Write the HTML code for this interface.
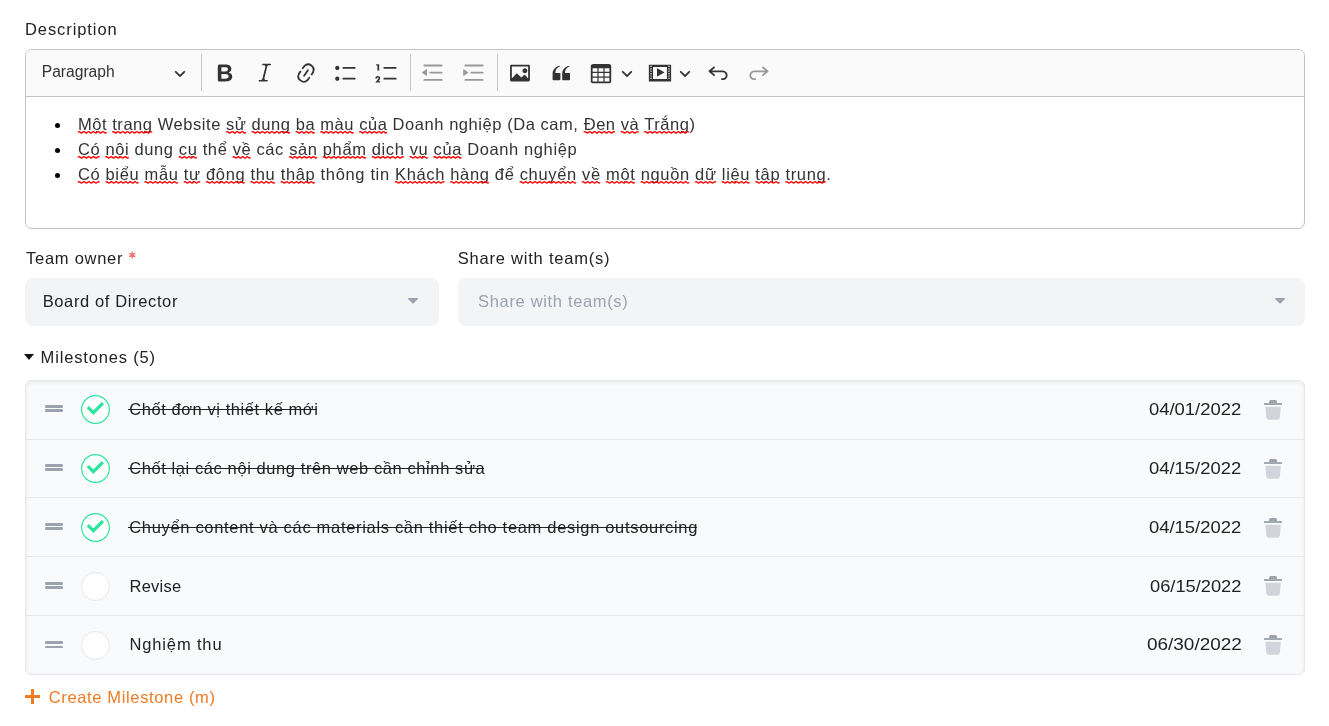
<!DOCTYPE html>
<html><head><meta charset="utf-8">
<style>
*{box-sizing:border-box;margin:0;padding:0}
html,body{width:1329px;height:726px;overflow:hidden;background:#fff}
body{font-family:"Liberation Sans",sans-serif;color:#111;position:relative}
#wrap{position:absolute;left:0;top:0;width:1329px;height:726px;will-change:transform}
.a{position:absolute;white-space:nowrap}
.t{font-size:16.5px;line-height:20px}
#editor{left:25px;top:49px;width:1280px;height:180px;border:1px solid #c4c4c4;border-radius:7px;overflow:hidden;background:#fff}
#tb{left:0;top:0;width:1278px;height:47px;background:#fafafa;border-bottom:1px solid #c4c4c4}
.sep{position:absolute;top:4.2px;width:1px;height:36.5px;background:#c4c4c4}
.ic{position:absolute;width:24px;height:24px}
.dd{position:absolute;width:12px;height:12px}
.dot{position:absolute;left:55px;width:5.2px;height:5.2px;border-radius:50%;background:#000}
.sel{position:absolute;border-radius:8px;background:#f3f4f6;height:48px;top:278px}
.ms{position:absolute;left:25px;top:380px;width:1280px;height:295px;border:1px solid #e5e7eb;border-radius:6px;background:#f9fafb;overflow:hidden;box-shadow:inset 0 2px 4px 0 rgba(0,0,0,0.06)}
.msep{position:absolute;left:26px;width:1278px;height:1px;background:#e5e7eb}
.handle{position:absolute;left:45.2px;width:17.4px;height:7px}
.handle:before,.handle:after{content:"";position:absolute;left:0;width:17.4px;height:2.6px;background:#9ca3af;border-radius:1.3px}
.handle:before{top:0}.handle:after{top:4.4px}
.circ{position:absolute;left:81px;width:29px;height:29px}
.circ.done{border:none;background:none}
.chk{position:absolute;left:0;top:0;width:29px;height:29px}
.t.done::after{content:"";position:absolute;left:-1.2px;right:1.4px;top:9.77px;height:1.25px;background:#222}
.trash{position:absolute;left:1264px;width:18px;height:20px}
</style></head><body>
<div id="wrap">
<div class="a t" style="left:25.00px;top:19.18px;color:#222;letter-spacing:0.920px">Description</div>
<div id="editor" class="a">
  <div id="tb" class="a">
    <div class="a" style="left:15.8px;top:12.35px;font-size:15.6px;color:#333;line-height:20px">Paragraph</div>
    <svg class="dd" style="left:147.8px;top:16.5px" viewBox="0 0 10 10"><path fill="#333" d="M.941 4.523a.75.75 0 1 1 1.06-1.06l3.006 3.005 3.005-3.005a.75.75 0 1 1 1.06 1.06l-3.549 3.55a.75.75 0 0 1-1.168-.136L.941 4.523z"/></svg>
    <div class="sep" style="left:175px"></div>
    <!-- bold -->
    <svg class="ic" style="left:186.8px;top:11px" viewBox="0 0 20 20"><path fill="#333" d="M10.187 17H5.773c-.637 0-1.092-.138-1.364-.415-.273-.277-.409-.718-.409-1.323V4.738c0-.617.14-1.062.419-1.332.279-.27.73-.406 1.354-.406h4.68c.69 0 1.288.041 1.793.124.506.083.96.242 1.36.478.341.197.644.447.906.75a3.262 3.262 0 0 1 .808 2.162c0 1.401-.722 2.426-2.167 3.075C15.05 10.175 16 11.315 16 13.01a3.756 3.756 0 0 1-2.296 3.504 6.1 6.1 0 0 1-1.517.377c-.571.073-1.238.11-2 .11zm-.217-6.217H7v4.087h3.069c1.977 0 2.965-.69 2.965-2.072 0-.707-.256-1.22-.768-1.537-.512-.319-1.277-.478-2.296-.478zM7 5.13v3.619h2.606c.729 0 1.292-.067 1.69-.2a1.6 1.6 0 0 0 .91-.765c.165-.267.247-.566.247-.897 0-.707-.26-1.176-.778-1.409-.519-.232-1.31-.348-2.375-.348H7z"/></svg>
    <!-- italic -->
    <svg class="ic" style="left:227.1px;top:11px" viewBox="0 0 20 20"><path fill="#333" d="m9.586 14.633.021.004c-.036.335.095.655.393.962.082.083.173.15.274.201h1.474a.6.6 0 1 1 0 1.2H5.304a.6.6 0 0 1 0-1.2h1.15c.474-.07.809-.182 1.005-.334.157-.122.291-.32.404-.595l2.416-9.864c.014-.138.021-.216.022-.234a.615.615 0 0 0-.019-.105c-.036-.336-.17-.632-.4-.888-.105-.116-.242-.208-.41-.275H8.196a.6.6 0 0 1 0-1.2h6.276a.6.6 0 1 1 0 1.2h-1.149c-.474.07-.809.182-1.005.333-.157.122-.291.32-.404.595l-2.416 9.864c-.014.138-.02.216-.021.233z"/></svg>
    <!-- link -->
    <svg class="ic" style="left:267.8px;top:11px" viewBox="0 0 20 20"><path fill="#333" d="m11.077 15 .991-1.416a.75.75 0 1 1 1.229.86l-1.148 1.64a.748.748 0 0 1-.217.206 5.251 5.251 0 0 1-8.503-5.955.741.741 0 0 1 .12-.274l1.147-1.639a.75.75 0 1 1 1.228.86L4.933 10.7l.006.003a3.75 3.75 0 0 0 6.132 4.294l.006.004zm5.494-5.335a.748.748 0 0 1-.12.274l-1.147 1.639a.75.75 0 1 1-1.228-.86l.86-1.23a3.75 3.75 0 0 0-6.144-4.301l-.86 1.229a.75.75 0 0 1-1.229-.86l1.148-1.64a.748.748 0 0 1 .217-.206 5.251 5.251 0 0 1 8.503 5.955zm-4.563-2.532a.75.75 0 0 1 .184 1.045l-3.155 4.505a.75.75 0 1 1-1.229-.86l3.155-4.506a.75.75 0 0 1 1.045-.184z"/></svg>
    <!-- bulleted -->
    <svg class="ic" style="left:307.7px;top:11px" viewBox="0 0 20 20"><path fill="#333" d="M7 5.75c0 .414.336.75.75.75h9.5a.75.75 0 1 0 0-1.5h-9.5a.75.75 0 0 0-.75.75zm-6 0C1 4.784 1.777 4 2.75 4c.966 0 1.75.777 1.75 1.75 0 .966-.777 1.75-1.75 1.75C1.784 7.5 1 6.723 1 5.75zm6 9c0 .414.336.75.75.75h9.5a.75.75 0 1 0 0-1.5h-9.5a.75.75 0 0 0-.75.75zm-6 0c0-.966.777-1.75 1.75-1.75.966 0 1.75.777 1.75 1.75 0 .966-.777 1.75-1.75 1.75-.966 0-1.75-.777-1.75-1.75z"/></svg>
    <!-- numbered -->
    <svg class="ic" style="left:349.4px;top:11px" viewBox="0 0 20 20"><path fill="#333" d="M7 5.75c0 .414.336.75.75.75h9.5a.75.75 0 1 0 0-1.5h-9.5a.75.75 0 0 0-.75.75zM3.5 3v5H2V3.7H1v-1h2.5V3zM.343 17.857l2.59-3.257H2.92a.6.6 0 1 0-1.04 0H.302a2 2 0 1 1 3.995 0h-.001c-.048.405-.16.734-.333.988-.175.254-.59.692-1.244 1.312H4.3v1h-4l.043-.043zM7 14.75a.75.75 0 0 1 .75-.75h9.5a.75.75 0 1 1 0 1.5h-9.5a.75.75 0 0 1-.75-.75z"/></svg>
    <div class="sep" style="left:384px"></div>
    <!-- outdent -->
    <svg class="ic" style="left:394.6px;top:11px" viewBox="0 0 20 20"><path fill="#999" d="M2 3.75c0 .414.336.75.75.75h14.5a.75.75 0 1 0 0-1.5H2.75a.75.75 0 0 0-.75.75zm5 6c0 .414.336.75.75.75h9.5a.75.75 0 1 0 0-1.5h-9.5a.75.75 0 0 0-.75.75zM2.75 16.5h14.5a.75.75 0 1 0 0-1.5H2.75a.75.75 0 1 0 0 1.5zm1.618-9.55L.98 9.358a.4.4 0 0 0 .013.661l3.39 2.207A.4.4 0 0 0 5 11.892V7.275a.4.4 0 0 0-.632-.326z"/></svg>
    <!-- indent -->
    <svg class="ic" style="left:435.8px;top:11px" viewBox="0 0 20 20"><path fill="#999" d="M2 3.75c0 .414.336.75.75.75h14.5a.75.75 0 1 0 0-1.5H2.75a.75.75 0 0 0-.75.75zm5 6c0 .414.336.75.75.75h9.5a.75.75 0 1 0 0-1.5h-9.5a.75.75 0 0 0-.75.75zM2.75 16.5h14.5a.75.75 0 1 0 0-1.5H2.75a.75.75 0 1 0 0 1.5zM1.632 6.95 5.02 9.358a.4.4 0 0 1-.013.661l-3.39 2.207A.4.4 0 0 1 1 11.892V7.275a.4.4 0 0 1 .632-.326z"/></svg>
    <div class="sep" style="left:471px"></div>
    <!-- image -->
    <svg class="ic" style="left:481.8px;top:11px" viewBox="0 0 20 20"><path fill="#333" d="M6.91 10.54c.26-.23.64-.21.88.03l3.36 3.14 2.23-2.06a.64.64 0 0 1 .87 0l2.52 2.97V4.5H3.2v10.12l3.71-4.08zm10.27-7.51c.6 0 1.09.47 1.09 1.05v11.84c0 .59-.49 1.06-1.09 1.06H2.79c-.6 0-1.09-.47-1.09-1.06V4.08c0-.58.49-1.05 1.1-1.05h14.38zm-5.08 5.08c0-1.1.9-2 2-2s2 .9 2 2-.9 2-2 2-2-.9-2-2z"/></svg>
    <!-- quote -->
    <svg class="ic" style="left:523.2px;top:11px" viewBox="0 0 20 20"><path fill="#333" d="M3 10.423a6.5 6.5 0 0 1 6.056-6.408l.038.67C6.448 5.423 5.354 7.663 5.22 10H9c.552 0 .5.432.5.986v4.511c0 .554-.448.503-1 .503h-5c-.552 0-.5-.449-.5-1.003v-4.574zm8 0a6.5 6.5 0 0 1 6.056-6.408l.038.67c-2.646.739-3.74 2.979-3.873 5.315H17c.552 0 .5.432.5.986v4.511c0 .554-.448.503-1 .503h-5c-.552 0-.5-.449-.5-1.003v-4.574z"/></svg>
    <!-- table -->
    <svg class="ic" style="left:562.8px;top:11px" viewBox="0 0 20 20"><path fill="#333" d="M3 6v3h4V6H3zm0 4v3h4v-3H3zm0 4v3h4v-3H3zm5 3h4v-3H8v3zm5 0h4v-3h-4v3zm4-4v-3h-4v3h4zm0-4V6h-4v3h4zm1.5 8a1.5 1.5 0 0 1-1.5 1.5H3A1.5 1.5 0 0 1 1.5 17V4c.222-.863 1.068-1.5 2-1.5h13c.932 0 1.778.637 2 1.5v13zM12 13v-3H8v3h4zm0-4V6H8v3h4z"/></svg>
    <svg class="dd" style="left:595px;top:16.5px" viewBox="0 0 10 10"><path fill="#333" d="M.941 4.523a.75.75 0 1 1 1.06-1.06l3.006 3.005 3.005-3.005a.75.75 0 1 1 1.06 1.06l-3.549 3.55a.75.75 0 0 1-1.168-.136L.941 4.523z"/></svg>
    <!-- media -->
    <svg class="ic" style="left:622.2px;top:11px" viewBox="0 0 20 20"><path fill="#333" d="M18.68 3.03c.6 0 .59-.03.59.55v12.84c0 .59.01.56-.59.56H1.29c-.6 0-.59.03-.59-.56V3.58c0-.58-.01-.55.6-.55h17.38zM15.77 15V5H4.2v10h11.57zM2 4v1h1V4H2zm0 2v1h1V6H2zm0 2v1h1V8H2zm0 2v1h1v-1H2zm0 2v1h1v-1H2zm0 2v1h1v-1H2zM17 4v1h1V4h-1zm0 2v1h1V6h-1zm0 2v1h1V8h-1zm0 2v1h1v-1h-1zm0 2v1h1v-1h-1zm0 2v1h1v-1h-1zM7.5 6.677a.4.4 0 0 1 .593-.351l5.133 2.824a.4.4 0 0 1 0 .7l-5.133 2.824A.4.4 0 0 1 7.5 12.323V6.677z"/></svg>
    <svg class="dd" style="left:652.8px;top:16.5px" viewBox="0 0 10 10"><path fill="#333" d="M.941 4.523a.75.75 0 1 1 1.06-1.06l3.006 3.005 3.005-3.005a.75.75 0 1 1 1.06 1.06l-3.549 3.55a.75.75 0 0 1-1.168-.136L.941 4.523z"/></svg>
    <!-- undo -->
    <svg class="ic" style="left:679.8px;top:11px" viewBox="0 0 20 20"><path fill="#333" d="m5.042 9.367 2.189 1.837a.75.75 0 0 1-.965 1.149l-3.788-3.18a.747.747 0 0 1-.21-.284.75.75 0 0 1 .17-.945L6.23 4.762a.75.75 0 1 1 .964 1.15L4.863 7.866h8.917A.75.75 0 0 1 14 7.9a4 4 0 1 1-1.477 7.718l.344-1.489a2.5 2.5 0 1 0 1.094-4.73l.008-.032H5.042z"/></svg>
    <!-- redo -->
    <svg class="ic" style="left:720.6px;top:11px" viewBox="0 0 20 20"><path fill="#999" d="m14.958 9.367-2.189 1.837a.75.75 0 0 0 .965 1.149l3.788-3.18a.747.747 0 0 0 .21-.284.75.75 0 0 0-.17-.945L13.77 4.762a.75.75 0 1 0-.964 1.15l2.331 1.955H6.22A.75.75 0 0 0 6 7.9a4 4 0 1 0 1.477 7.718l-.344-1.489A2.5 2.5 0 1 1 6.039 9.4l-.008-.032h8.927z"/></svg>
  </div>
  </div>
<div class="dot" style="top:122.8px"></div>
<div class="dot" style="top:147.8px"></div>
<div class="dot" style="top:172.8px"></div>
<div class="a t" style="left:77.90px;top:114.08px;color:#333;letter-spacing:0.554px"><span class="sq">Một</span> <span class="sq">trang</span> Website <span class="sq">sử</span> <span class="sq">dung</span> <span class="sq">ba</span> <span class="sq">màu</span> <span class="sq">của</span> Doanh nghiệp (Da cam, <span class="sq">Đen</span> <span class="sq">và</span> <span class="sq">Trắng</span>)</div>
<div class="a t" style="left:77.90px;top:139.13px;color:#333;letter-spacing:0.610px"><span class="sq">Có</span> <span class="sq">nội</span> dung <span class="sq">cụ</span> thể <span class="sq">về</span> các <span class="sq">sản</span> <span class="sq">phẩm</span> <span class="sq">dịch</span> <span class="sq">vụ</span> <span class="sq">của</span> Doanh nghiệp</div>
<div class="a t" style="left:77.90px;top:164.18px;color:#333;letter-spacing:0.648px"><span class="sq">Có</span> <span class="sq">biểu</span> <span class="sq">mẫu</span> <span class="sq">tự</span> <span class="sq">động</span> <span class="sq">thu</span> <span class="sq">thập</span> thông tin <span class="sq">Khách</span> <span class="sq">hàng</span> để <span class="sq">chuyển</span> <span class="sq">về</span> <span class="sq">một</span> <span class="sq">nguồn</span> <span class="sq">dữ</span> <span class="sq">liệu</span> <span class="sq">tập</span> <span class="sq">trung</span>.</div>
<svg class="a" style="left:0;top:0" width="1329" height="726"><path fill="none" stroke="#f00" stroke-width="1.4" d="M77.89 132.30Q79.08 131.00 80.28 132.30Q81.47 133.60 82.66 132.30Q83.85 131.00 85.05 132.30Q86.24 133.60 87.43 132.30Q88.62 131.00 89.81 132.30Q91.01 133.60 92.20 132.30Q93.39 131.00 94.58 132.30Q95.78 133.60 96.97 132.30Q98.16 131.00 99.35 132.30Q100.55 133.60 101.74 132.30Q102.93 131.00 104.12 132.30Q105.32 133.60 106.51 132.30M112.20 132.30Q113.37 131.00 114.55 132.30Q115.72 133.60 116.89 132.30Q118.06 131.00 119.23 132.30Q120.40 133.60 121.58 132.30Q122.75 131.00 123.92 132.30Q125.09 133.60 126.26 132.30Q127.43 131.00 128.61 132.30Q129.78 133.60 130.95 132.30Q132.12 131.00 133.29 132.30Q134.46 133.60 135.64 132.30Q136.81 131.00 137.98 132.30Q139.15 133.60 140.32 132.30Q141.49 131.00 142.67 132.30Q143.84 133.60 145.01 132.30Q146.18 131.00 147.35 132.30Q148.52 133.60 149.70 132.30Q150.87 131.00 152.04 132.30M226.06 132.30Q227.30 131.00 228.54 132.30Q229.78 133.60 231.03 132.30Q232.27 131.00 233.51 132.30Q234.75 133.60 235.99 132.30Q237.23 131.00 238.47 132.30Q239.71 133.60 240.95 132.30Q242.19 131.00 243.43 132.30Q244.67 133.60 245.91 132.30M251.61 132.30Q252.81 131.00 254.01 132.30Q255.21 133.60 256.41 132.30Q257.61 131.00 258.81 132.30Q260.01 133.60 261.21 132.30Q262.40 131.00 263.60 132.30Q264.80 133.60 266.00 132.30Q267.20 131.00 268.40 132.30Q269.60 133.60 270.80 132.30Q272.00 131.00 273.20 132.30Q274.40 133.60 275.60 132.30Q276.80 131.00 278.00 132.30Q279.20 133.60 280.40 132.30Q281.60 131.00 282.80 132.30Q284.00 133.60 285.19 132.30Q286.39 131.00 287.59 132.30Q288.79 133.60 289.99 132.30M295.69 132.30Q296.87 131.00 298.05 132.30Q299.23 133.60 300.42 132.30Q301.60 131.00 302.78 132.30Q303.96 133.60 305.14 132.30Q306.33 131.00 307.51 132.30Q308.69 133.60 309.87 132.30Q311.06 131.00 312.24 132.30Q313.42 133.60 314.60 132.30M320.30 132.30Q321.48 131.00 322.67 132.30Q323.86 133.60 325.04 132.30Q326.23 131.00 327.41 132.30Q328.60 133.60 329.79 132.30Q330.97 131.00 332.16 132.30Q333.34 133.60 334.53 132.30Q335.72 131.00 336.90 132.30Q338.09 133.60 339.27 132.30Q340.46 131.00 341.65 132.30Q342.83 133.60 344.02 132.30Q345.21 131.00 346.39 132.30Q347.58 133.60 348.76 132.30Q349.95 131.00 351.14 132.30Q352.32 133.60 353.51 132.30M359.20 132.30Q360.36 131.00 361.51 132.30Q362.67 133.60 363.82 132.30Q364.98 131.00 366.13 132.30Q367.29 133.60 368.44 132.30Q369.59 131.00 370.75 132.30Q371.90 133.60 373.06 132.30Q374.21 131.00 375.37 132.30Q376.52 133.60 377.68 132.30Q378.83 131.00 379.99 132.30Q381.14 133.60 382.30 132.30Q383.45 131.00 384.61 132.30Q385.76 133.60 386.91 132.30M583.66 132.30Q584.86 131.00 586.07 132.30Q587.28 133.60 588.48 132.30Q589.69 131.00 590.90 132.30Q592.11 133.60 593.31 132.30Q594.52 131.00 595.73 132.30Q596.93 133.60 598.14 132.30Q599.35 131.00 600.56 132.30Q601.76 133.60 602.97 132.30Q604.18 131.00 605.38 132.30Q606.59 133.60 607.80 132.30Q609.00 131.00 610.21 132.30Q611.42 133.60 612.63 132.30Q613.83 131.00 615.04 132.30M620.73 132.30Q622.02 131.00 623.30 132.30Q624.59 133.60 625.88 132.30Q627.16 131.00 628.45 132.30Q629.73 133.60 631.02 132.30Q632.30 131.00 633.59 132.30Q634.87 133.60 636.16 132.30Q637.44 131.00 638.73 132.30M644.12 132.30Q645.30 131.00 646.48 132.30Q647.65 133.60 648.83 132.30Q650.01 131.00 651.18 132.30Q652.36 133.60 653.54 132.30Q654.71 131.00 655.89 132.30Q657.07 133.60 658.24 132.30Q659.42 131.00 660.60 132.30Q661.77 133.60 662.95 132.30Q664.13 131.00 665.30 132.30Q666.48 133.60 667.66 132.30Q668.83 131.00 670.01 132.30Q671.19 133.60 672.36 132.30Q673.54 131.00 674.72 132.30Q675.89 133.60 677.07 132.30Q678.25 131.00 679.42 132.30Q680.60 133.60 681.78 132.30Q682.95 131.00 684.13 132.30Q685.31 133.60 686.48 132.30Q687.66 131.00 688.84 132.30M77.89 157.34Q79.10 156.04 80.30 157.34Q81.51 158.64 82.71 157.34Q83.92 156.04 85.12 157.34Q86.33 158.64 87.54 157.34Q88.74 156.04 89.95 157.34Q91.15 158.64 92.36 157.34Q93.56 156.04 94.77 157.34Q95.98 158.64 97.18 157.34Q98.39 156.04 99.59 157.34M105.41 157.34Q106.57 156.04 107.73 157.34Q108.89 158.64 110.06 157.34Q111.22 156.04 112.38 157.34Q113.54 158.64 114.71 157.34Q115.87 156.04 117.03 157.34Q118.19 158.64 119.36 157.34Q120.52 156.04 121.68 157.34Q122.84 158.64 124.01 157.34Q125.17 156.04 126.33 157.34Q127.49 158.64 128.66 157.34M178.81 157.34Q179.94 156.04 181.07 157.34Q182.20 158.64 183.32 157.34Q184.45 156.04 185.58 157.34Q186.71 158.64 187.84 157.34Q188.96 156.04 190.09 157.34Q191.22 158.64 192.35 157.34Q193.48 156.04 194.60 157.34Q195.73 158.64 196.86 157.34M232.62 157.34Q233.75 156.04 234.88 157.34Q236.01 158.64 237.14 157.34Q238.26 156.04 239.39 157.34Q240.52 158.64 241.65 157.34Q242.78 156.04 243.90 157.34Q245.03 158.64 246.16 157.34Q247.29 156.04 248.42 157.34Q249.54 158.64 250.67 157.34M289.19 157.34Q290.35 156.04 291.51 157.34Q292.67 158.64 293.83 157.34Q294.98 156.04 296.14 157.34Q297.30 158.64 298.46 157.34Q299.62 156.04 300.78 157.34Q301.94 158.64 303.10 157.34Q304.26 156.04 305.42 157.34Q306.58 158.64 307.74 157.34Q308.90 156.04 310.06 157.34Q311.22 158.64 312.38 157.34Q313.54 156.04 314.70 157.34Q315.86 158.64 317.02 157.34M322.83 157.34Q324.03 156.04 325.22 157.34Q326.42 158.64 327.62 157.34Q328.82 156.04 330.01 157.34Q331.21 158.64 332.41 157.34Q333.61 156.04 334.80 157.34Q336.00 158.64 337.20 157.34Q338.40 156.04 339.59 157.34Q340.79 158.64 341.99 157.34Q343.19 156.04 344.38 157.34Q345.58 158.64 346.78 157.34Q347.97 156.04 349.17 157.34Q350.37 158.64 351.57 157.34Q352.76 156.04 353.96 157.34Q355.16 158.64 356.36 157.34Q357.55 156.04 358.75 157.34Q359.95 158.64 361.15 157.34Q362.34 156.04 363.54 157.34Q364.74 158.64 365.94 157.34M371.75 157.34Q372.98 156.04 374.22 157.34Q375.45 158.64 376.69 157.34Q377.92 156.04 379.16 157.34Q380.39 158.64 381.63 157.34Q382.86 156.04 384.10 157.34Q385.33 158.64 386.57 157.34Q387.80 156.04 389.04 157.34Q390.27 158.64 391.51 157.34Q392.74 156.04 393.98 157.34Q395.21 158.64 396.45 157.34Q397.68 156.04 398.92 157.34Q400.15 158.64 401.39 157.34Q402.62 156.04 403.86 157.34M409.67 157.34Q410.80 156.04 411.93 157.34Q413.06 158.64 414.18 157.34Q415.31 156.04 416.44 157.34Q417.57 158.64 418.69 157.34Q419.82 156.04 420.95 157.34Q422.08 158.64 423.21 157.34Q424.33 156.04 425.46 157.34Q426.59 158.64 427.72 157.34M433.53 157.34Q434.69 156.04 435.85 157.34Q437.01 158.64 438.17 157.34Q439.33 156.04 440.49 157.34Q441.65 158.64 442.81 157.34Q443.97 156.04 445.13 157.34Q446.29 158.64 447.45 157.34Q448.60 156.04 449.76 157.34Q450.92 158.64 452.08 157.34Q453.24 156.04 454.40 157.34Q455.56 158.64 456.72 157.34Q457.88 156.04 459.04 157.34Q460.20 158.64 461.36 157.34M77.89 182.39Q79.10 181.09 80.31 182.39Q81.51 183.69 82.72 182.39Q83.93 181.09 85.14 182.39Q86.35 183.69 87.55 182.39Q88.76 181.09 89.97 182.39Q91.18 183.69 92.39 182.39Q93.59 181.09 94.80 182.39Q96.01 183.69 97.22 182.39Q98.43 181.09 99.63 182.39M105.52 182.39Q106.70 181.09 107.88 182.39Q109.07 183.69 110.25 182.39Q111.44 181.09 112.62 182.39Q113.80 183.69 114.99 182.39Q116.17 181.09 117.35 182.39Q118.54 183.69 119.72 182.39Q120.91 181.09 122.09 182.39Q123.27 183.69 124.46 182.39Q125.64 181.09 126.83 182.39Q128.01 183.69 129.19 182.39Q130.38 181.09 131.56 182.39Q132.75 183.69 133.93 182.39Q135.11 181.09 136.30 182.39Q137.48 183.69 138.66 182.39M144.55 182.39Q145.74 181.09 146.93 182.39Q148.13 183.69 149.32 182.39Q150.51 181.09 151.70 182.39Q152.90 183.69 154.09 182.39Q155.28 181.09 156.48 182.39Q157.67 183.69 158.86 182.39Q160.05 181.09 161.25 182.39Q162.44 183.69 163.63 182.39Q164.82 181.09 166.02 182.39Q167.21 183.69 168.40 182.39Q169.60 181.09 170.79 182.39Q171.98 183.69 173.17 182.39Q174.37 181.09 175.56 182.39Q176.75 183.69 177.95 182.39M183.83 182.39Q184.99 181.09 186.16 182.39Q187.32 183.69 188.48 182.39Q189.65 181.09 190.81 182.39Q191.97 183.69 193.14 182.39Q194.30 181.09 195.46 182.39Q196.63 183.69 197.79 182.39Q198.95 181.09 200.12 182.39M206.00 182.39Q207.21 181.09 208.42 182.39Q209.62 183.69 210.83 182.39Q212.04 181.09 213.25 182.39Q214.46 183.69 215.67 182.39Q216.87 181.09 218.08 182.39Q219.29 183.69 220.50 182.39Q221.71 181.09 222.92 182.39Q224.12 183.69 225.33 182.39Q226.54 181.09 227.75 182.39Q228.96 183.69 230.17 182.39Q231.37 181.09 232.58 182.39Q233.79 183.69 235.00 182.39Q236.21 181.09 237.41 182.39Q238.62 183.69 239.83 182.39Q241.04 181.09 242.25 182.39Q243.46 183.69 244.66 182.39M250.55 182.39Q251.76 181.09 252.97 182.39Q254.18 183.69 255.40 182.39Q256.61 181.09 257.82 182.39Q259.03 183.69 260.24 182.39Q261.46 181.09 262.67 182.39Q263.88 183.69 265.09 182.39Q266.30 181.09 267.52 182.39Q268.73 183.69 269.94 182.39Q271.15 181.09 272.37 182.39Q273.58 183.69 274.79 182.39M280.67 182.39Q281.89 181.09 283.11 182.39Q284.32 183.69 285.54 182.39Q286.76 181.09 287.97 182.39Q289.19 183.69 290.41 182.39Q291.62 181.09 292.84 182.39Q294.06 183.69 295.27 182.39Q296.49 181.09 297.71 182.39Q298.92 183.69 300.14 182.39Q301.36 181.09 302.57 182.39Q303.79 183.69 305.01 182.39Q306.22 181.09 307.44 182.39Q308.66 183.69 309.88 182.39Q311.09 181.09 312.31 182.39Q313.53 183.69 314.74 182.39M395.00 182.39Q396.18 181.09 397.35 182.39Q398.53 183.69 399.70 182.39Q400.88 181.09 402.05 182.39Q403.23 183.69 404.41 182.39Q405.58 181.09 406.76 182.39Q407.93 183.69 409.11 182.39Q410.29 181.09 411.46 182.39Q412.64 183.69 413.81 182.39Q414.99 181.09 416.16 182.39Q417.34 183.69 418.52 182.39Q419.69 181.09 420.87 182.39Q422.04 183.69 423.22 182.39Q424.39 181.09 425.57 182.39Q426.75 183.69 427.92 182.39Q429.10 181.09 430.27 182.39Q431.45 183.69 432.63 182.39Q433.80 181.09 434.98 182.39Q436.15 183.69 437.33 182.39Q438.50 181.09 439.68 182.39Q440.86 183.69 442.03 182.39Q443.21 181.09 444.38 182.39M450.27 182.39Q451.47 181.09 452.68 182.39Q453.89 183.69 455.10 182.39Q456.31 181.09 457.52 182.39Q458.72 183.69 459.93 182.39Q461.14 181.09 462.35 182.39Q463.56 183.69 464.76 182.39Q465.97 181.09 467.18 182.39Q468.39 183.69 469.60 182.39Q470.81 181.09 472.01 182.39Q473.22 183.69 474.43 182.39Q475.64 181.09 476.85 182.39Q478.06 183.69 479.26 182.39Q480.47 181.09 481.68 182.39Q482.89 183.69 484.10 182.39Q485.31 181.09 486.51 182.39Q487.72 183.69 488.93 182.39M519.70 182.39Q520.88 181.09 522.06 182.39Q523.23 183.69 524.41 182.39Q525.58 181.09 526.76 182.39Q527.94 183.69 529.11 182.39Q530.29 181.09 531.47 182.39Q532.64 183.69 533.82 182.39Q534.99 181.09 536.17 182.39Q537.35 183.69 538.52 182.39Q539.70 181.09 540.88 182.39Q542.05 183.69 543.23 182.39Q544.40 181.09 545.58 182.39Q546.76 183.69 547.93 182.39Q549.11 181.09 550.29 182.39Q551.46 183.69 552.64 182.39Q553.82 181.09 554.99 182.39Q556.17 183.69 557.34 182.39Q558.52 181.09 559.70 182.39Q560.87 183.69 562.05 182.39Q563.23 181.09 564.40 182.39Q565.58 183.69 566.75 182.39Q567.93 181.09 569.11 182.39Q570.28 183.69 571.46 182.39Q572.64 181.09 573.81 182.39Q574.99 183.69 576.16 182.39M582.05 182.39Q583.18 181.09 584.31 182.39Q585.44 183.69 586.57 182.39Q587.70 181.09 588.83 182.39Q589.96 183.69 591.09 182.39Q592.22 181.09 593.35 182.39Q594.48 183.69 595.61 182.39Q596.74 181.09 597.87 182.39Q599.00 183.69 600.13 182.39M606.02 182.39Q607.22 181.09 608.42 182.39Q609.62 183.69 610.82 182.39Q612.02 181.09 613.22 182.39Q614.42 183.69 615.62 182.39Q616.82 181.09 618.02 182.39Q619.22 183.69 620.42 182.39Q621.62 181.09 622.82 182.39Q624.02 183.69 625.22 182.39Q626.42 181.09 627.62 182.39Q628.82 183.69 630.02 182.39Q631.22 181.09 632.42 182.39Q633.62 183.69 634.82 182.39M640.70 182.39Q641.92 181.09 643.13 182.39Q644.34 183.69 645.55 182.39Q646.76 181.09 647.97 182.39Q649.19 183.69 650.40 182.39Q651.61 181.09 652.82 182.39Q654.03 183.69 655.25 182.39Q656.46 181.09 657.67 182.39Q658.88 183.69 660.09 182.39Q661.31 181.09 662.52 182.39Q663.73 183.69 664.94 182.39Q666.15 181.09 667.37 182.39Q668.58 183.69 669.79 182.39Q671.00 181.09 672.21 182.39Q673.43 183.69 674.64 182.39Q675.85 181.09 677.06 182.39Q678.27 183.69 679.48 182.39Q680.70 181.09 681.91 182.39Q683.12 183.69 684.33 182.39Q685.54 181.09 686.76 182.39Q687.97 183.69 689.18 182.39M695.06 182.39Q696.22 181.09 697.38 182.39Q698.54 183.69 699.70 182.39Q700.86 181.09 702.02 182.39Q703.18 183.69 704.34 182.39Q705.50 181.09 706.66 182.39Q707.82 183.69 708.98 182.39Q710.14 181.09 711.31 182.39Q712.47 183.69 713.63 182.39Q714.79 181.09 715.95 182.39M721.83 182.39Q722.98 181.09 724.13 182.39Q725.28 183.69 726.43 182.39Q727.59 181.09 728.74 182.39Q729.89 183.69 731.04 182.39Q732.19 181.09 733.34 182.39Q734.49 183.69 735.64 182.39Q736.80 181.09 737.95 182.39Q739.10 183.69 740.25 182.39Q741.40 181.09 742.55 182.39Q743.70 183.69 744.86 182.39Q746.01 181.09 747.16 182.39Q748.31 183.69 749.46 182.39M755.34 182.39Q756.56 181.09 757.77 182.39Q758.98 183.69 760.19 182.39Q761.40 181.09 762.62 182.39Q763.83 183.69 765.04 182.39Q766.25 181.09 767.47 182.39Q768.68 183.69 769.89 182.39Q771.10 181.09 772.31 182.39Q773.53 183.69 774.74 182.39Q775.95 181.09 777.16 182.39Q778.37 183.69 779.59 182.39M785.47 182.39Q786.65 181.09 787.83 182.39Q789.02 183.69 790.20 182.39Q791.38 181.09 792.56 182.39Q793.75 183.69 794.93 182.39Q796.11 181.09 797.30 182.39Q798.48 183.69 799.66 182.39Q800.84 181.09 802.03 182.39Q803.21 183.69 804.39 182.39Q805.57 181.09 806.76 182.39Q807.94 183.69 809.12 182.39Q810.31 181.09 811.49 182.39Q812.67 183.69 813.85 182.39Q815.04 181.09 816.22 182.39Q817.40 183.69 818.58 182.39Q819.77 181.09 820.95 182.39Q822.13 183.69 823.31 182.39Q824.50 181.09 825.68 182.39"/></svg>
<div class="a t" style="left:26.10px;top:248.08px;color:#222;letter-spacing:0.722px">Team owner</div>
<svg class="a" style="left:127px;top:250px" width="11" height="10" viewBox="127 250 11 10"><path d="M132.3 251.4V258.4M129.27 253.15L135.33 256.65M129.27 256.65L135.33 253.15" stroke="#f87171" stroke-width="1.35"/></svg>
<div class="a t" style="left:457.80px;top:248.08px;color:#222;letter-spacing:0.782px">Share with team(s)</div>
<div class="sel" style="left:25px;width:414px"></div>
<div class="a t" style="left:42.70px;top:290.98px;color:#222;letter-spacing:0.625px">Board of Director</div>
<svg class="a" style="left:408px;top:298px" width="10.2" height="6" viewBox="0 0 10.2 6"><path d="M0.6 0h9a0.6 0.6 0 0 1 .45 1L5.5 5.6a0.6 0.6 0 0 1-.8 0L0.15 1A0.6 0.6 0 0 1 .6 0z" fill="#9ca3af"/></svg>
<div class="sel" style="left:458px;width:847px"></div>
<div class="a t" style="left:478.10px;top:290.98px;color:#9ca3af;letter-spacing:0.659px">Share with team(s)</div>
<svg class="a" style="left:1274.6px;top:298px" width="10.2" height="6" viewBox="0 0 10.2 6"><path d="M0.6 0h9a0.6 0.6 0 0 1 .45 1L5.5 5.6a0.6 0.6 0 0 1-.8 0L0.15 1A0.6 0.6 0 0 1 .6 0z" fill="#9ca3af"/></svg>
<svg class="a" style="left:24.2px;top:353.8px" width="10" height="6" viewBox="0 0 10 6"><path d="M0 0h10L5 6z" fill="#111"/></svg>
<div class="a t" style="left:40.60px;top:346.98px;color:#222;letter-spacing:0.831px">Milestones (5)</div>
<div class="ms"></div>
<div class="msep" style="top:439px"></div>
<div class="handle" style="top:405.0px"></div><div class="circ done" style="top:394.9px"><svg class="chk" viewBox="0 0 29 29"><circle cx="14.5" cy="14.5" r="13.85" fill="#fff" stroke="#2ee59d" stroke-width="1.2"/><path d="M6.8 12.2 L12.35 17.7 L21.9 8.2" fill="none" stroke="#2ee59d" stroke-width="3.3"/></svg></div>
<div class="a t done" style="left:129.20px;top:399.18px;color:#222;letter-spacing:0.565px">Chốt đơn vị thiết kế mới</div>
<div class="a t" style="font-size:16px;left:1149.15px;top:400.16px;color:#222;transform-origin:0 50%;transform:scaleX(1.1519)">04/01/2022</div>
<svg class="trash" style="top:400.05px" viewBox="0 0 18 20"><path fill="#9ca3af" d="M5.1 3.2V1.5Q5.1 0 6.6 0H11.5Q13 0 13 1.5V3.2Z"/><rect x="0" y="3.1" width="18" height="1.85" fill="#9ca3af"/><path fill="#d1d5db" d="M1.4 6.8H16.8L15.9 17.2Q15.7 19.7 13.2 19.7H5Q2.5 19.7 2.3 17.2Z"/></svg>
<div class="msep" style="top:497px"></div>
<div class="handle" style="top:464.1px"></div><div class="circ done" style="top:454.0px"><svg class="chk" viewBox="0 0 29 29"><circle cx="14.5" cy="14.5" r="13.85" fill="#fff" stroke="#2ee59d" stroke-width="1.2"/><path d="M6.8 12.2 L12.35 17.7 L21.9 8.2" fill="none" stroke="#2ee59d" stroke-width="3.3"/></svg></div>
<div class="a t done" style="left:129.20px;top:457.88px;color:#222;letter-spacing:0.588px">Chốt lại các nội dung trên web cần chỉnh sửa</div>
<div class="a t" style="font-size:16px;left:1149.25px;top:458.86px;color:#222;transform-origin:0 50%;transform:scaleX(1.1506)">04/15/2022</div>
<svg class="trash" style="top:458.81px" viewBox="0 0 18 20"><path fill="#9ca3af" d="M5.1 3.2V1.5Q5.1 0 6.6 0H11.5Q13 0 13 1.5V3.2Z"/><rect x="0" y="3.1" width="18" height="1.85" fill="#9ca3af"/><path fill="#d1d5db" d="M1.4 6.8H16.8L15.9 17.2Q15.7 19.7 13.2 19.7H5Q2.5 19.7 2.3 17.2Z"/></svg>
<div class="msep" style="top:556px"></div>
<div class="handle" style="top:523.1px"></div><div class="circ done" style="top:513.0px"><svg class="chk" viewBox="0 0 29 29"><circle cx="14.5" cy="14.5" r="13.85" fill="#fff" stroke="#2ee59d" stroke-width="1.2"/><path d="M6.8 12.2 L12.35 17.7 L21.9 8.2" fill="none" stroke="#2ee59d" stroke-width="3.3"/></svg></div>
<div class="a t done" style="left:129.20px;top:516.98px;color:#222;letter-spacing:0.681px">Chuyển content và các materials cần thiết cho team design outsourcing</div>
<div class="a t" style="font-size:16px;left:1149.25px;top:517.96px;color:#222;transform-origin:0 50%;transform:scaleX(1.1506)">04/15/2022</div>
<svg class="trash" style="top:517.57px" viewBox="0 0 18 20"><path fill="#9ca3af" d="M5.1 3.2V1.5Q5.1 0 6.6 0H11.5Q13 0 13 1.5V3.2Z"/><rect x="0" y="3.1" width="18" height="1.85" fill="#9ca3af"/><path fill="#d1d5db" d="M1.4 6.8H16.8L15.9 17.2Q15.7 19.7 13.2 19.7H5Q2.5 19.7 2.3 17.2Z"/></svg>
<div class="msep" style="top:615px"></div>
<div class="handle" style="top:582.1px"></div><div class="circ" style="top:572.3px"><svg class="chk" viewBox="0 0 29 29"><circle cx="14.5" cy="14.5" r="14" fill="#fff" stroke="#e5e7eb" stroke-width="1"/></svg></div>
<div class="a t" style="left:129.50px;top:575.98px;color:#222;letter-spacing:0.260px">Revise</div>
<div class="a t" style="font-size:16px;left:1149.96px;top:576.96px;color:#222;transform-origin:0 50%;transform:scaleX(1.1418)">06/15/2022</div>
<svg class="trash" style="top:576.33px" viewBox="0 0 18 20"><path fill="#9ca3af" d="M5.1 3.2V1.5Q5.1 0 6.6 0H11.5Q13 0 13 1.5V3.2Z"/><rect x="0" y="3.1" width="18" height="1.85" fill="#9ca3af"/><path fill="#d1d5db" d="M1.4 6.8H16.8L15.9 17.2Q15.7 19.7 13.2 19.7H5Q2.5 19.7 2.3 17.2Z"/></svg>

<div class="handle" style="top:641.3px"></div><div class="circ" style="top:631.1px"><svg class="chk" viewBox="0 0 29 29"><circle cx="14.5" cy="14.5" r="14" fill="#fff" stroke="#e5e7eb" stroke-width="1"/></svg></div>
<div class="a t" style="left:129.50px;top:634.18px;color:#222;letter-spacing:0.856px">Nghiệm thu</div>
<div class="a t" style="font-size:16px;left:1146.62px;top:635.16px;color:#222;transform-origin:0 50%;transform:scaleX(1.1835)">06/30/2022</div>
<svg class="trash" style="top:635.09px" viewBox="0 0 18 20"><path fill="#9ca3af" d="M5.1 3.2V1.5Q5.1 0 6.6 0H11.5Q13 0 13 1.5V3.2Z"/><rect x="0" y="3.1" width="18" height="1.85" fill="#9ca3af"/><path fill="#d1d5db" d="M1.4 6.8H16.8L15.9 17.2Q15.7 19.7 13.2 19.7H5Q2.5 19.7 2.3 17.2Z"/></svg>

<svg class="a" style="left:25px;top:689px" width="15" height="15" viewBox="0 0 15 15"><path d="M7.5 0v15M0 7.5h15" stroke="#f07b22" stroke-width="3"/></svg>
<div class="a t" style="left:48.80px;top:687.18px;color:#f07b22;letter-spacing:0.637px">Create Milestone (m)</div>
</div>
</body></html>
